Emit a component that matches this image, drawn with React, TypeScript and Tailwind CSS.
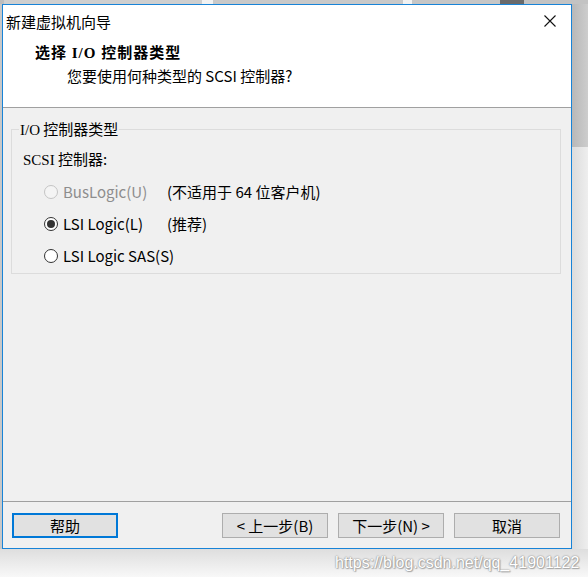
import React from "react";

const ui = '"Noto Sans CJK SC", "Liberation Sans", sans-serif';
const serif = '"Liberation Serif", "Noto Sans CJK SC", serif';

function CloseIcon() {
  return (
    <svg width="12" height="12" viewBox="0 0 12 12" className="block">
      <path d="M0.5 0.5 L11.5 11.5 M11.5 0.5 L0.5 11.5" stroke="#111" strokeWidth="1.1" />
    </svg>
  );
}

function Radio({ state }: { state: "disabled" | "checked" | "off" }) {
  if (state === "disabled") {
    return <span className="block h-[14px] w-[14px] rounded-full border border-[#c4c4c4] bg-[#f4f4f4]" />;
  }
  return (
    <span className="flex h-[14px] w-[14px] items-center justify-center rounded-full border border-[#333] bg-white">
      {state === "checked" && <span className="block h-[8px] w-[8px] rounded-full bg-[#333]" />}
    </span>
  );
}

function Option({
  state,
  label,
  note,
}: {
  state: "disabled" | "checked" | "off";
  label: string;
  note?: string;
}) {
  return (
    <div className="flex h-[20px] items-center">
      <div className="ml-[32px] mr-[5px]">
        <Radio state={state} />
      </div>
      <span className={`w-[104px] whitespace-nowrap ${state === "disabled" ? "text-[#8d8d8d]" : "text-black"}`}>
        {label}
      </span>
      {note && <span className="whitespace-nowrap">{note}</span>}
    </div>
  );
}

function Btn({ children, focused }: { children: React.ReactNode; focused?: boolean }) {
  return (
    <button
      type="button"
      className={`flex h-[25px] w-[106px] items-center justify-center bg-[#e1e1e1] text-[15px] leading-none text-black ${
        focused ? "border-2 border-[#0078d7]" : "border border-[#adadad]"
      }`}
      style={{ fontFamily: ui }}
    >
      {children}
    </button>
  );
}

export default function App() {
  return (
    <div className="flex h-[577px] w-[588px] flex-col overflow-hidden bg-[#f6f6f6]" style={{ fontFamily: ui }}>
      {/* desktop behind the dialog */}
      <div className="flex h-[4px] shrink-0">
        <div className="w-[4px] bg-[#bdbdbd]" />
        <div className="w-[198px] bg-[#cfcfcf]" />
        <div className="w-[11px] bg-[#f2f2f2]" />
        <div className="w-[190px] bg-[#c9c9c9]" />
        <div className="w-[9px] bg-[#f2f2f2]" />
        <div className="w-[88px] bg-[#c6c6c6]" />
        <div className="w-[24px] bg-[#6a6a6a]" />
        <div className="flex-1 bg-[#c3c3c3]" />
      </div>

      <div className="flex h-[545px] shrink-0">
        <div className="w-[2px] bg-[#c8c8c8]" />

        {/* dialog window */}
        <div className="flex w-[570px] flex-col border border-[#1883d7] bg-white">
          <div className="flex h-[32px] shrink-0 items-center justify-between">
            <span className="pl-[3px] text-[15px] leading-none text-black">新建虚拟机向导</span>
            <span className="mr-[15px]">
              <CloseIcon />
            </span>
          </div>

          <div className="h-[70px] shrink-0 pt-[6px]">
            <div
              className="pl-[32px] text-[15px] font-bold leading-[20px] tracking-[1px] text-black"
              style={{ fontFamily: serif }}
            >
              选择 I/O 控制器类型
            </div>
            <div className="mt-[3px] pl-[64px] text-[15px] leading-[20px] text-black">
              您要使用何种类型的 SCSI 控制器?
            </div>
          </div>

          <div className="h-px shrink-0 bg-[#a0a0a0]" />

          <div className="flex flex-1 flex-col bg-[#f0f0f0]">
            <div className="flex-1 pt-[11px]">
              <fieldset className="ml-[8px] mr-[10px] border border-[#dcdcdc] pb-[7px] text-[15px] leading-[20px] text-black">
                <legend className="ml-[7px] px-[1px] leading-[20px]">
                  <span style={{ fontFamily: serif }}>I/O</span> 控制器类型
                </legend>
                <div className="mt-[9px] pl-[11px]">
                  <span style={{ fontFamily: serif }}>SCSI</span> 控制器:
                </div>
                <div className="mt-[12px] flex flex-col gap-[12px]">
                  <Option state="disabled" label="BusLogic(U)" note="(不适用于 64 位客户机)" />
                  <Option state="checked" label="LSI Logic(L)" note="(推荐)" />
                  <Option state="off" label="LSI Logic SAS(S)" />
                </div>
              </fieldset>
            </div>

            <div className="h-px shrink-0 bg-[#a0a0a0]" />

            <div className="flex h-[46px] shrink-0 items-start pl-[9px] pr-[11px] pt-[11px]">
              <Btn focused>帮助</Btn>
              <div className="ml-auto flex gap-[10px]">
                <Btn>&lt; 上一步(B)</Btn>
                <Btn>下一步(N) &gt;</Btn>
                <Btn>取消</Btn>
              </div>
            </div>
          </div>
        </div>

        <div className="flex w-[16px] flex-col">
          <div className="h-[143px] bg-gradient-to-r from-[#b8b8b8] to-[#cdcdcd]" />
          <div className="flex-1 bg-gradient-to-r from-[#dcdcdc] to-[#eeeeee]" />
        </div>
      </div>

      <div className="flex-1 bg-gradient-to-b from-[#dedede] to-[#f8f8f8] pl-[335px]">
        <span
          className="text-[16px] leading-[20px] text-white"
          style={{
            fontFamily: '"Liberation Sans", Arial, sans-serif',
            textShadow: "0 0 2px #8a8a8a, 0 0 1px #9a9a9a, 1px 1px 1px #b0b0b0",
          }}
        >
          https://blog.csdn.net/qq_41901122
        </span>
      </div>
    </div>
  );
}
